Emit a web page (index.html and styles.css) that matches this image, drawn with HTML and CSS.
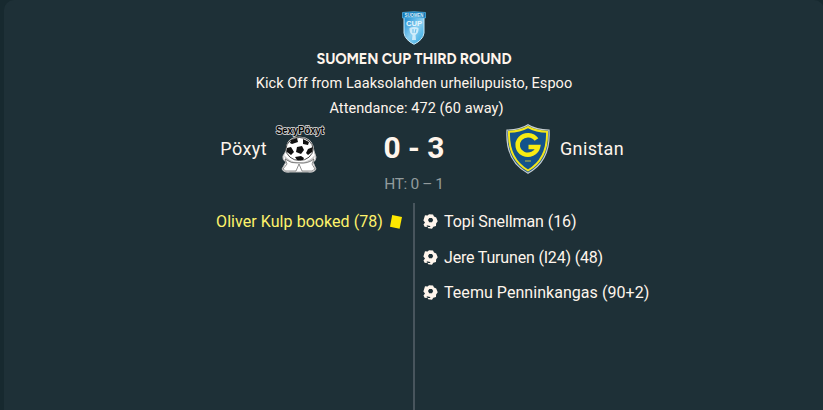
FILE: index.html
```html
<!DOCTYPE html>
<html lang="en">
<head>
    <meta charset="UTF-8">
    <meta name="viewport" content="width=device-width, initial-scale=1.0">
    <title>Pöxyt 0 - 3 Gnistan</title>
    <link rel="stylesheet" href="styles.css">
</head>
<body>
    <svg class="defs" width="0" height="0">
        <symbol id="ball" viewBox="0 0 15 15">
            <path fill="#fff5ec" fill-rule="evenodd" d="M2 1.2 L4.6 1.6 L6 .3 L10 .5 L11 2.6 L13.2 3.4 L14.7 7.3 L13.1 9.4 L13 12 L10.3 12.8 L9 14.7 L5.2 14.2 L4.4 12.6 L1.8 13 L.5 10.4 L2 8.4 L.4 6.5 Z M6.2 4 L5 6 L6.2 8.300 L9 8.300 L10.2 6 L9 4 Z M3.6 11.300 L4.400 12.700 L7.2 13 L7.2 11.900 Z"/>
        </symbol>
    </svg>

    <div class="panel">
        <svg class="cup" width="24" height="34" viewBox="0 0 24 34">
            <defs>
                <linearGradient id="cupFill" x1="0" y1="0" x2="1" y2="1">
                    <stop offset="0" stop-color="#1688cf"/>
                    <stop offset=".5" stop-color="#8bd0f2"/>
                    <stop offset="1" stop-color="#2ba4df"/>
                </linearGradient>
            </defs>
            <path d="M2 6 H22 V22 Q21 29 12 33.300 Q3 29 2 22 Z" fill="url(#cupFill)" stroke="#c9eafa" stroke-width="1"/>
            <path d="M.5 1.500 Q12 -.2 23.500 1.500 V7 Q12 5.600 .5 7 Z" fill="#1479b8" stroke="#58b8e8" stroke-width=".7"/>
            <text x="12" y="5.700" text-anchor="middle" textLength="19" lengthAdjust="spacingAndGlyphs" font-size="5" fill="#d9f1fc">SUOMEN</text>
            <text x="12" y="14.500" text-anchor="middle" textLength="16" lengthAdjust="spacingAndGlyphs" font-size="8" fill="#e6f6fd">CUP</text>
            <path d="M7.500 17 Q12 15 16.500 17 Q17 22 13.500 24 L14 29 H10 L10.500 24 Q7 22 7.500 17 Z" fill="#e9f7fd" opacity=".75"/>
            <path d="M11 18 V22 M14 18 L13 22" stroke="#66bde9" stroke-width="1"/>
        </svg>

        <h1 class="competition">SUOMEN CUP THIRD ROUND</h1>
        <p class="venue">Kick Off from Laaksolahden urheilupuisto, Espoo</p>
        <p class="attendance">Attendance: 472 (60 away)</p>

        <div class="match">
            <div class="team home">
                <span class="home-name">Pöxyt</span>
                <svg class="home-logo" width="52" height="50" viewBox="0 0 52 50">
                    <path d="M12 27 Q12 13 25 13 Q39 13 40 27 L42 33 Q42 37 39 38 L42 45 Q40 49 34 48 H16 Q10 49 8 45 L12 38 Q8 36 9 32 Z" fill="#fff" stroke="#bbb" stroke-width="1"/>
                    <path d="M10 31 Q17 39 25 38 Q34 39 41 31 Q40 37 36 39 L37 44 H28 L27 40 H23 L22 44 H14 L15 39 Q11 37 10 31 Z" fill="#c9c9c9"/>
                    <path d="M11 35 Q17 40 25 39 Q34 40 40 35 L38 40 L41 45 Q39 48 33 47 H28 L25 40 L22 47 H16 Q11 48 9 45 L13 40 Z" fill="#fff" stroke="#444" stroke-width=".6"/>
                    <ellipse cx="25.500" cy="25" rx="13.500" ry="11.500" fill="#fff" stroke="#222" stroke-width=".8"/>
                    <path d="M23 23 L28 22 L30 26 L27 30 L22 28 Z M17 16 L23 14 L24 18 L18 20 L16 19 Z M29 15 L35 18 L34 21 L29 20 Z M13 24 L17 23 L20 28 L17 31 L13 28 Z M34 25 L39 23 L38 28 L34 31 L32 29 Z M21 33 L27 32 L30 34 L29 36 L23 36 Z" fill="#111"/>
                    <text class="wordmark" x="26" y="9.500" text-anchor="middle" textLength="48" lengthAdjust="spacingAndGlyphs">SexyPöxyt</text>
                </svg>
            </div>
            <div class="result">
                <div class="score">0 - 3</div>
                <div class="half-time">HT: 0 – 1</div>
            </div>
            <div class="team away">
                <svg width="44" height="50" viewBox="0 0 44 50">
                    <path d="M1 6 Q14 6 22 .8 Q30 6 43 6 Q45 37 22 49.200 Q-1 37 1 6 Z" fill="#1d568e" stroke="#c8ced0" stroke-width="1.200"/>
                    <path d="M3 7.700 Q14 7.400 22 3 Q30 7.400 41 7.700 Q42 35 22 46.500 Q2 35 3 7.700 Z" fill="#13538b" stroke="#f4e61b" stroke-width="2"/>
                    <path d="M30.500 15.500 A10.300 9.800 0 1 0 32 23 H22.500" fill="none" stroke="#f7eb13" stroke-width="4.500"/>
                    <path d="M19 37 H25" stroke="#8d9d55" stroke-width="1.500"/>
                </svg>
                <span class="away-name">Gnistan</span>
            </div>
        </div>

        <div class="events">
            <ul class="home-events">
                <li class="booking">
                    <span class="booked">Oliver Kulp booked (78)</span>
                    <svg width="14" height="16" viewBox="0 0 14 16"><path d="M3.200 1 L13 3 L10.600 14.800 L1 12.700 Z" fill="#ffe800"/></svg>
                </li>
            </ul>
            <ul class="away-events">
                <li><svg width="15" height="15"><use href="#ball"/></svg><span class="goal-one">Topi Snellman (16)</span></li>
                <li><svg width="15" height="15"><use href="#ball"/></svg><span class="goal-two">Jere Turunen (I24) (48)</span></li>
                <li><svg width="15" height="15"><use href="#ball"/></svg><span class="goal-three">Teemu Penninkangas (90+2)</span></li>
            </ul>
        </div>
    </div>
</body>
</html>
```
FILE: styles.css
```css
* {
    box-sizing: border-box;
}

body {
    margin: 0;
    height: 410px;
    overflow: hidden;
    background: #17292f;
    color: #fff5ec;
    font-family: Roboto, "Liberation Sans", sans-serif;
}

.defs {
    display: block;
}

.panel {
    display: flex;
    flex-direction: column;
    align-items: center;
    width: 820px;
    height: 420px;
    margin-left: 4px;
    padding-top: 11px;
    background: #1e3037;
    border-radius: 10px;
}

.cup {
    flex: none;
    overflow: visible;
    font-family: "Liberation Sans", sans-serif;
    font-weight: bold;
}

h1,
p,
ul {
    margin: 0;
    padding: 0;
}

.competition {
    height: 26px;
    margin-top: 1px;
    font-family: Figtree, Lato, sans-serif;
    font-size: 14.5px;
    font-weight: 700;
    letter-spacing: -0.13px;
    line-height: 26px;
    white-space: nowrap;
}

.venue,
.attendance {
    height: 25px;
    font-size: 14.5px;
    letter-spacing: 0.07px;
    line-height: 23px;
    white-space: nowrap;
}

.attendance {
    padding-left: 5px;
}

.match {
    display: grid;
    grid-template-columns: 1fr 180px 1fr;
    width: 100%;
    height: 79px;
    margin-top: 2px;
}

.team {
    display: flex;
    align-items: center;
    height: 50px;
    gap: 7px;
    font-size: 18px;
    line-height: 20px;
}

.home-name {
    letter-spacing: 0.4px;
}

.home-logo {
    margin-right: -2px;
    overflow: visible;
}

.home {
    justify-content: flex-end;
}

.away {
    gap: 10px;
    padding-left: 2px;
}

.away-name {
    letter-spacing: 0.35px;
}

.wordmark {
    font-family: "Liberation Sans", sans-serif;
    font-size: 11px;
    font-weight: bold;
    fill: #000;
    stroke: #c4c4c4;
    stroke-width: 2px;
    stroke-linejoin: round;
    paint-order: stroke;
}

.result {
    text-align: center;
}

.score {
    height: 50px;
    font-size: 30px;
    font-weight: 700;
    line-height: 48px;
}

.half-time {
    font-size: 15.5px;
    letter-spacing: -0.4px;
    line-height: 20px;
    color: #929b9d;
}

.events {
    display: grid;
    grid-template-columns: 1fr 1fr;
    width: 100%;
    height: 217px;
    font-size: 16px;
}

.home-events {
    padding-top: 1px;
    padding-right: 11px;
}

.away-events {
    margin-left: -1px;
    padding-top: 1px;
    padding-left: 8px;
    border-left: 2px solid #48555d;
}

.events li {
    display: flex;
    align-items: center;
    height: 35.5px;
    gap: 6px;
    white-space: nowrap;
}

.booking {
    justify-content: flex-end;
    color: #fff36b;
}

.booked {
    letter-spacing: 0.06px;
}

.goal-one {
    letter-spacing: -0.08px;
}

.goal-two {
    letter-spacing: -0.18px;
}

.goal-three {
    letter-spacing: 0.05px;
}
```
